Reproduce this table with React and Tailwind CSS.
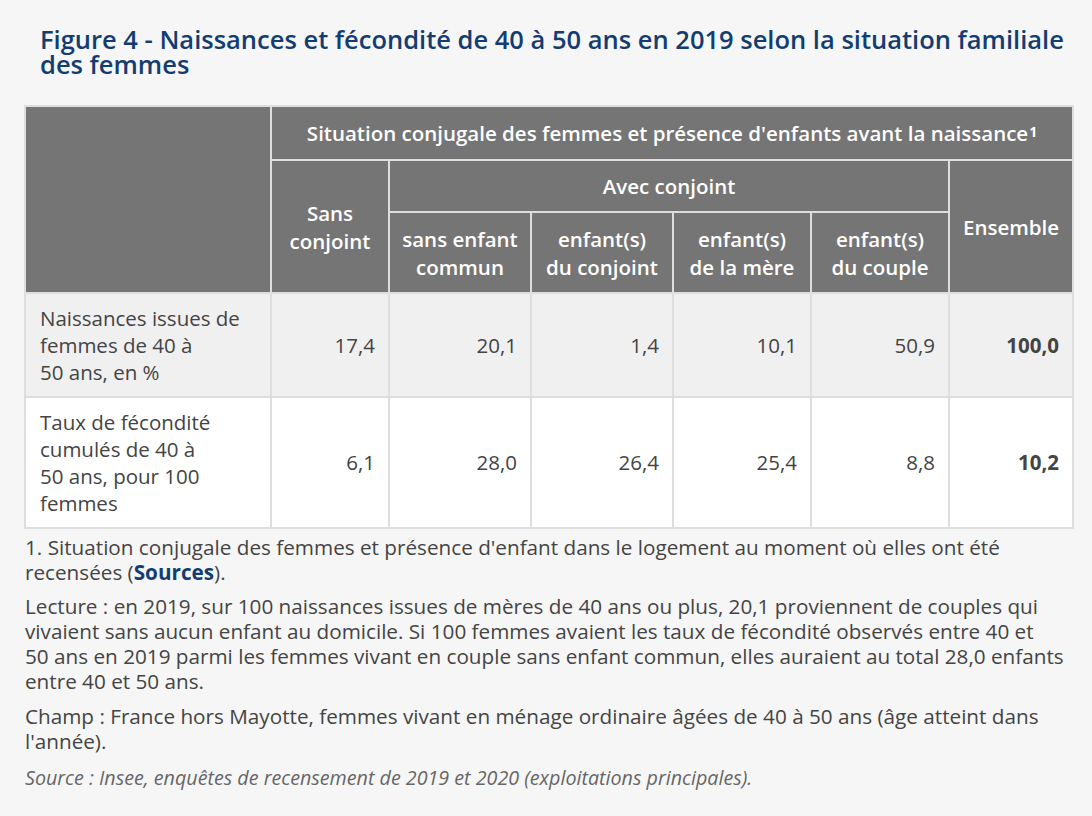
import React from "react";

const rows = [
  {
    label: "Naissances issues de femmes de 40 à 50\u00a0ans, en %",
    values: ["17,4", "20,1", "1,4", "10,1", "50,9"],
    total: "100,0",
    bg: "bg-[#f0f0f0]",
    h: "h-[104px]",
  },
  {
    label: "Taux de fécondité cumulés de 40 à 50\u00a0ans, pour 100 femmes",
    values: ["6,1", "28,0", "26,4", "25,4", "8,8"],
    total: "10,2",
    bg: "bg-white",
    h: "h-[131px]",
  },
];

const th = "border-2 border-[#dedede] bg-[#757575] text-white font-semibold text-center align-middle leading-[28px]";
const td = "border-2 border-[#dedede] text-right align-middle pr-[13px]";

export default function App() {
  return (
    <div
      className="min-h-[816px] bg-[#f6f6f6] text-[#444] pt-[27px]"
      style={{ fontFamily: '"Open Sans", "Liberation Sans", sans-serif' }}
    >
      <h1 className="pl-[40px] pr-[20px] text-[25.5px] leading-[25px] font-semibold text-[#133d72]">
        Figure 4 - Naissances et fécondité de 40 à 50 ans en 2019 selon la situation familiale des femmes
      </h1>

      <div className="pl-[24px] mt-[28px]">
        <table className="table-fixed border-collapse w-[1048px] text-[20.5px] leading-[27px]">
          <colgroup>
            <col className="w-[246px]" />
            <col className="w-[118px]" />
            <col className="w-[142px]" />
            <col className="w-[142px]" />
            <col className="w-[138px]" />
            <col className="w-[138px]" />
            <col className="w-[124px]" />
          </colgroup>
          <thead>
            <tr className="h-[54px]">
              <th rowSpan={3} className={th}></th>
              <th colSpan={6} className={th}>
                Situation conjugale des femmes et présence d'enfants avant la naissance
                <sup className="text-[14px] font-bold relative -top-[4px] ml-[1px]">1</sup>
              </th>
            </tr>
            <tr className="h-[52px]">
              <th rowSpan={2} className={th}>
                Sans
                <br />
                conjoint
              </th>
              <th colSpan={4} className={th}>
                Avec conjoint
              </th>
              <th rowSpan={2} className={th}>
                Ensemble
              </th>
            </tr>
            <tr className="h-[81px]">
              <th className={th}>
                sans enfant
                <br />
                commun
              </th>
              <th className={th}>
                enfant(s)
                <br />
                du conjoint
              </th>
              <th className={th}>
                enfant(s)
                <br />
                de la mère
              </th>
              <th className={th}>
                enfant(s)
                <br />
                du couple
              </th>
            </tr>
          </thead>
          <tbody>
            {rows.map((r, i) => (
              <tr key={i} className={`${r.bg} ${r.h}`}>
                <td className="border-2 border-[#dedede] text-left align-middle pl-[14px] pr-[18px]">
                  {r.label}
                </td>
                {r.values.map((v, j) => (
                  <td key={j} className={td}>
                    {v}
                  </td>
                ))}
                <td className={`${td} font-bold`}>{r.total}</td>
              </tr>
            ))}
          </tbody>
        </table>
      </div>

      <div className="pl-[25px] pr-[20px] pt-[6px] text-[20.7px] leading-[25px] text-[#444]">
        <p>
          1. Situation conjugale des femmes et présence d'enfant dans le logement au moment où elles ont été recensées (
          <span className="font-bold text-[#133d72]">Sources</span>).
        </p>
        <p className="mt-[9px]">
          Lecture : en 2019, sur 100 naissances issues de mères de 40 ans ou plus, 20,1 proviennent de couples qui vivaient
          sans aucun enfant au domicile. Si 100 femmes avaient les taux de fécondité observés entre 40 et 50{"\u00a0"}ans en
          2019 parmi les femmes vivant en couple sans enfant commun, elles auraient au total 28,0 enfants entre 40 et
          50{"\u00a0"}ans.
        </p>
        <p className="mt-[10px]">
          Champ : France hors Mayotte, femmes vivant en ménage ordinaire âgées de 40 à 50 ans (âge atteint dans l'année).
        </p>
        <p className="mt-[11px] italic text-[#666] text-[19.7px]">
          Source : Insee, enquêtes de recensement de 2019 et 2020 (exploitations principales).
        </p>
      </div>
    </div>
  );
}
